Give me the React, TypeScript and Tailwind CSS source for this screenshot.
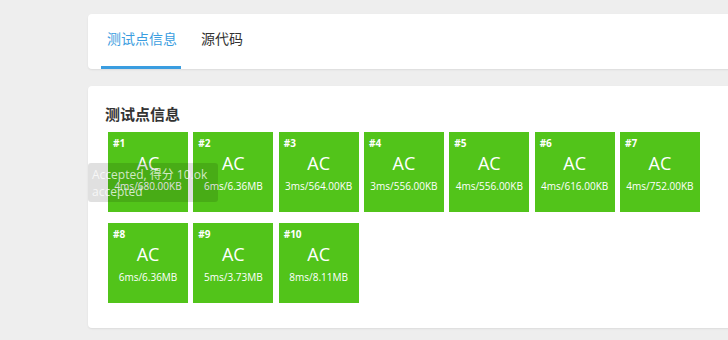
import React from 'react';

interface CaseResult {
  id: number;
  time: string;
  memory: string;
}

const cases: CaseResult[] = [
  { id: 1, time: '4ms', memory: '680.00KB' },
  { id: 2, time: '6ms', memory: '6.36MB' },
  { id: 3, time: '3ms', memory: '564.00KB' },
  { id: 4, time: '3ms', memory: '556.00KB' },
  { id: 5, time: '4ms', memory: '556.00KB' },
  { id: 6, time: '4ms', memory: '616.00KB' },
  { id: 7, time: '4ms', memory: '752.00KB' },
  { id: 8, time: '6ms', memory: '6.36MB' },
  { id: 9, time: '5ms', memory: '3.73MB' },
  { id: 10, time: '8ms', memory: '8.11MB' },
];

const CaseBox: React.FC<{ item: CaseResult }> = ({ item }) => (
  <div className="w-[80px] h-[80px] bg-[#52c41a] text-white flex flex-col px-[5px] pt-[4px]">
    <span className="text-[10px] font-bold leading-[14px]">#{item.id}</span>
    <span className="text-[18px] leading-[22px] text-center mt-[2px]">AC</span>
    <span className="text-[10px] leading-[14px] text-center mt-[5px] whitespace-nowrap">
      {item.time}/{item.memory}
    </span>
  </div>
);

export default function App() {
  return (
    <div
      className="w-[728px] h-[340px] bg-[#eeeeee] overflow-hidden pl-[88px] pt-[14px]"
      style={{ fontFamily: '"Open Sans", "Noto Sans CJK SC", sans-serif' }}
    >
      {/* tabs card */}
      <div className="w-[700px] h-[55px] bg-white rounded-[4px] shadow-[0_1px_2px_rgba(0,0,0,0.08)] flex items-end pl-[13px]">
        <div className="w-[80px] h-full flex flex-col items-center">
          <span className="flex-1 flex items-center pb-[3px] pl-[2px] text-[14px] text-[#3a9de0]">测试点信息</span>
          <span className="w-full h-[3px] bg-[#3a9de0]" />
        </div>
        <div className="h-full flex items-center ml-[15px] px-[5px] pb-[6px]">
          <span className="text-[14px] text-[#333]">源代码</span>
        </div>
      </div>

      {/* result card */}
      <div className="relative w-[700px] h-[242px] mt-[17px] bg-white rounded-[4px] shadow-[0_1px_2px_rgba(0,0,0,0.08)] pl-[17px] pt-[18px]">
        <h3 className="text-[15px] font-bold text-[#333] leading-[20px]">测试点信息</h3>
        <div className="w-[600px] ml-[3px] mt-[8px] flex flex-wrap gap-x-[5.33px] gap-y-[11px]">
          {cases.map((c) => (
            <CaseBox key={c.id} item={c} />
          ))}
        </div>

        {/* hover tooltip */}
        <div className="absolute left-0 top-[77px] w-[130px] h-[39px] rounded-[3px] bg-[rgba(0,0,0,0.12)] text-[rgba(255,255,255,0.75)] text-[12px] leading-[17px] px-[4px] pt-[3px] whitespace-nowrap overflow-hidden">
          <div>Accepted, 得分 10.ok</div>
          <div>accepted</div>
        </div>
      </div>
    </div>
  );
}
